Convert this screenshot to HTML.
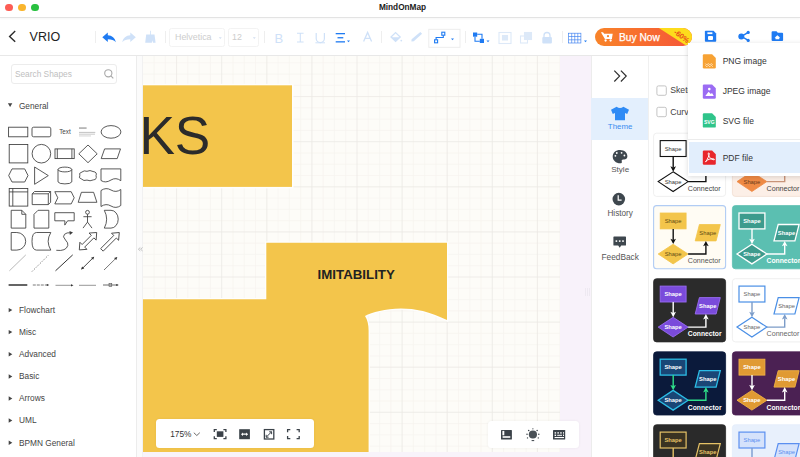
<!DOCTYPE html>
<html><head><meta charset="utf-8">
<style>
*{box-sizing:border-box;margin:0;padding:0}
html,body{width:800px;height:457px;overflow:hidden;background:#fff;font-family:"Liberation Sans",sans-serif;position:relative}
.a{position:absolute}
#titlebar{left:0;top:0;width:800px;height:18px;background:#fff;border-bottom:1px solid #e3e3e3;z-index:2;box-shadow:0 1px 2px rgba(0,0,0,.04)}
#toolbar{left:0;top:17px;width:800px;height:38.5px;background:#fff;border-bottom:1px solid #e8e8e8}
#left{left:0;top:55.5px;width:136.5px;height:402px;background:#fff;border-right:1px solid #ececec}
#strip{left:136.5px;top:55.5px;width:6.5px;height:402px;background:#fbfbfb;border-right:1px solid #f1f1f1}
#canvas{left:143px;top:55.5px;width:417.3px;height:396.5px;background:#fdfcf8;overflow:hidden}
#bstrip{left:143px;top:452px;width:417.3px;height:5px;background:#f8f3fa}
#pink{left:560.3px;top:55.5px;width:30.7px;height:402px;background:#f8f2fa}
#side{left:591px;top:55.5px;width:58px;height:402px;background:#fff;border-left:1px solid #ececec;border-right:1px solid #f0f0f0}
#theme{left:649px;top:55.5px;width:151px;height:402px;background:#fff}
#menu{left:688.4px;top:42.5px;width:120px;height:133px;background:#fff;box-shadow:0 1px 5px rgba(0,0,0,.15)}
</style></head><body>
<div id="titlebar" class="a">
<div class="a" style="left:5px;top:3.5px;width:7.8px;height:7.8px;border-radius:50%;background:#fd5d55"></div>
<div class="a" style="left:17.8px;top:3.5px;width:7.8px;height:7.8px;border-radius:50%;background:#f9b52d"></div>
<div class="a" style="left:30.9px;top:3.5px;width:7.8px;height:7.8px;border-radius:50%;background:#29c140"></div>
<div class="a" style="left:0;width:805px;top:2.8px;text-align:center;font-weight:bold;font-size:8.25px;color:#1a1a1a;line-height:10px">MindOnMap</div>
</div>
<div id="toolbar" class="a">
<svg class="a" style="left:0;top:0" width="800" height="38" viewBox="0 17 800 38">
<path d="M15.2 31 L9.6 36.4 L15.2 41.8" fill="none" stroke="#2b2b2b" stroke-width="1.4"/>
<g stroke="#eeeeee" stroke-width="1"><line x1="95.5" y1="31" x2="95.5" y2="43"/><line x1="165.5" y1="31" x2="165.5" y2="43"/><line x1="264.5" y1="31" x2="264.5" y2="43"/><line x1="381.5" y1="31" x2="381.5" y2="43"/><line x1="465.5" y1="31" x2="465.5" y2="43"/><line x1="562.5" y1="31" x2="562.5" y2="43"/></g>
<!-- undo -->
<path d="M102.3 37.3 L107.8 32.6 L107.8 35.3 C112 35.5 115 38 115.8 42.2 C114 40 111.5 39.3 107.8 39.3 L107.8 42 Z" fill="#1f7bf2"/>
<path d="M135.8 37.3 L130.3 32.6 L130.3 35.3 C126.1 35.5 123.1 38 122.3 42.2 C124.1 40 126.6 39.3 130.3 39.3 L130.3 42 Z" fill="#cfe1f8"/>
<!-- brush -->
<path d="M150 30.8 L150.8 30.8 L150.8 34.5 L154.5 34.5 L155.6 42.8 L153 42.8 L152.5 40.3 L151.8 42.8 L145.2 42.8 L146.2 34.5 L150 34.5 Z" fill="#cfe1f8"/>
<!-- font boxes -->
<rect x="169.5" y="28.5" width="55" height="18" rx="2" fill="none" stroke="#f3f3f3"/>
<rect x="228.5" y="28.5" width="30" height="18" rx="2" fill="none" stroke="#f3f3f3"/>
<path d="M218.8 37.3 L221.8 37.3 L220.3 39 Z" fill="#d3dff0"/>
<path d="M252.8 37.3 L255.8 37.3 L254.3 39 Z" fill="#d3dff0"/>
<text x="175" y="40.2" font-family="Liberation Sans" font-size="8.9" fill="#cdcdcd">Helvetica</text>
<text x="232" y="40.2" font-family="Liberation Sans" font-size="8.9" fill="#cdcdcd">12</text>
<!-- B I U -->
<text x="274.6" y="42.5" font-family="Liberation Sans" font-size="13" fill="#cfe1f8">B</text>
<path d="M297 33.3 H303.6 M300.3 33.3 L300.3 42 M297 42 H303.6" stroke="#cfe1f8" stroke-width="1.1" fill="none"/>
<path d="M316.2 33 V38.5 A4.1 4.1 0 0 0 324.4 38.5 V33" stroke="#cfe1f8" stroke-width="1.2" fill="none"/>
<line x1="315.4" y1="42.8" x2="325" y2="42.8" stroke="#cfe1f8" stroke-width="1"/>
<g fill="#1f7bf2"><rect x="335.7" y="33" width="9.3" height="1.3"/><rect x="337.5" y="37.1" width="5.8" height="1.3"/><rect x="335.7" y="41.2" width="9.3" height="1.3"/></g>
<path d="M347 40.6 L350 40.6 L348.5 42.3 Z" fill="#1f7bf2"/>
<path d="M363.6 41.6 L367.6 32.4 L371.6 41.6 M365.1 38.3 H370.1" stroke="#cfe1f8" stroke-width="1.3" fill="none"/>
<!-- fill bucket -->
<path d="M395.6 32.6 L400.2 37 L395.6 41.4 L391 37 Z" fill="none" stroke="#cfe1f8" stroke-width="1.3"/>
<path d="M391.2 37.2 H400 L395.6 41.2 Z" fill="#cfe1f8"/>
<circle cx="401.3" cy="40.6" r="0.9" fill="#cfe1f8"/>
<!-- pen -->
<path d="M420.3 32 L422.1 33.8 L413.8 41.3 L411.4 41.6 L411.6 39.2 Z" fill="#cfe1f8"/>
<!-- connector box -->
<rect x="428.8" y="29.3" width="31.2" height="18" fill="none" stroke="#ededed"/>
<g stroke="#1f7bf2" stroke-width="1.1" fill="none">
<rect x="434.6" y="39.8" width="3" height="3"/><rect x="441.8" y="32.2" width="3" height="3"/>
<path d="M436.1 39.8 V37.5 H443.3 V35.2"/></g>
<path d="M451 38.6 L454 38.6 L452.5 40.3 Z" fill="#1f7bf2"/>
<!-- position -->
<g fill="#1f7bf2"><rect x="473" y="32.5" width="4.2" height="4.2"/><rect x="479.8" y="38.8" width="4.2" height="4.2"/></g>
<path d="M477.2 34.2 H482 V38.8 M479.8 41.2 H475 V36.7" stroke="#1f7bf2" stroke-width="1.1" fill="none"/>
<path d="M486.5 40.6 L489.5 40.6 L488 42.3 Z" fill="#1f7bf2"/>
<!-- front/back/lock -->
<g fill="none" stroke="#dde9f8" stroke-width="1.1"><rect x="499" y="32.5" width="12" height="11"/><rect x="502.5" y="35.5" width="5" height="4.5" fill="#dde9f8"/>
<rect x="520.5" y="36" width="7" height="7"/><rect x="524.5" y="32.5" width="7" height="7" fill="#dde9f8"/></g>
<path d="M544 37 V35.5 A3 3 0 0 1 550 35.5 V37" stroke="#cfe1f8" stroke-width="1.3" fill="none"/>
<rect x="542.3" y="37" width="9.6" height="6.5" rx="1" fill="#cfe1f8"/>
<!-- table -->
<g stroke="#3a7ff0" stroke-width="0.65" fill="none"><rect x="568.6" y="33.2" width="12.3" height="9.8"/><line x1="568.6" y1="36.5" x2="580.9" y2="36.5"/><line x1="568.6" y1="39.8" x2="580.9" y2="39.8"/><line x1="571.7" y1="33.2" x2="571.7" y2="43"/><line x1="574.75" y1="33.2" x2="574.75" y2="43"/><line x1="577.8" y1="33.2" x2="577.8" y2="43"/></g>
<path d="M584 40.6 L587 40.6 L585.5 42.3 Z" fill="#1f7bf2"/>
</svg>
<div class="a" style="left:595px;top:10.6px;width:96.5px;height:18.4px;border-radius:9.2px;overflow:hidden;background:linear-gradient(90deg,#f8842a 0%,#f86f2e 45%,#f4553a 100%)">
<svg class="a" style="left:0;top:-0.2px" width="97" height="19" viewBox="595 27.4 97 19">
<polygon points="657.3,27.4 692,27.4 692,46 686,46" fill="#fddc1c"/>
<text transform="translate(673.2,33.6) rotate(36)" font-family="Liberation Sans" font-size="7.4" font-weight="bold" fill="#e8481c">-60%</text>
<g fill="#fff"><path d="M600.9 32.6 L603 32.6 L604.2 34.2 L612.7 34.2 L611.9 39.3 L604.9 39.3 Z"/><circle cx="605.6" cy="40.9" r="1.15"/><circle cx="610.6" cy="40.9" r="1.15"/></g>
<circle cx="608" cy="36.6" r="1.1" fill="#f8842a"/>
</svg>
<div class="a" style="left:24px;top:4.6px;font-size:10.2px;color:#fff;line-height:12px;white-space:nowrap;-webkit-text-stroke:0.25px #fff">Buy Now</div>
</div>
<svg class="a" style="left:700px;top:12px" width="90" height="32" viewBox="700 29 90 32">
<path d="M704.9 31.5 Q704.9 30.7 705.7 30.7 L713.5 30.7 L716.2 33.4 L716.2 40.9 Q716.2 41.7 715.4 41.7 L705.7 41.7 Q704.9 41.7 704.9 40.9 Z" fill="#1f7bf2"/>
<rect x="707.4" y="32.3" width="5" height="1.8" fill="#fff"/>
<rect x="708" y="36.1" width="5" height="3.8" rx="0.9" fill="#fff"/>
<g fill="#1f7bf2"><circle cx="741.3" cy="36.4" r="3"/><circle cx="748.2" cy="32.4" r="1.6"/><circle cx="748.2" cy="40.4" r="1.6"/></g>
<path d="M741.4 36.4 L748.3 32.3 M741.4 36.4 L748.3 40.3" stroke="#1f7bf2" stroke-width="1.4"/>
<path d="M771.6 32.3 Q771.6 31.3 772.6 31.3 L776.5 31.3 L777.8 32.8 L782.1 32.8 Q783.1 32.8 783.1 33.8 L783.1 40.1 Q783.1 41.1 782.1 41.1 L772.6 41.1 Q771.6 41.1 771.6 40.1 Z" fill="#1f7bf2"/>
<path d="M774.6 37.8 L777.4 35.2 L780.2 37.8 Z M775.5 37.6 H779.3 V39.3 H775.5 Z" fill="#fff"/>
</svg>
<div class="a" style="left:29.6px;top:13px;font-size:12.5px;color:#222;line-height:14px">VRIO</div>
</div>
<div id="left" class="a">
<div class="a" style="left:10.5px;top:8.3px;width:106.5px;height:20.1px;border:1px solid #ececec;border-radius:3px"></div>
<div class="a" style="left:14.9px;top:13.4px;font-size:8.34px;color:#c0c0c0;line-height:10px;white-space:nowrap">Search Shapes</div>
<svg class="a" style="left:0;top:0" width="137" height="402" viewBox="0 55.5 137 402">
<circle cx="108.3" cy="72.8" r="3.6" fill="none" stroke="#a9a9a9" stroke-width="1.1"/>
<line x1="110.9" y1="75.4" x2="113.3" y2="77.8" stroke="#a9a9a9" stroke-width="1.1"/>
<path d="M7.9 102.7 L12.3 102.7 L10.1 106.6 Z" fill="#444"/>
<g fill="#444"><path d="M8.7 307.4 L12.3 309.6 L8.7 311.8 Z"/><path d="M8.7 329.4 L12.3 331.6 L8.7 333.8 Z"/><path d="M8.7 351.6 L12.3 353.8 L8.7 356.0 Z"/><path d="M8.7 373.8 L12.3 376.0 L8.7 378.2 Z"/><path d="M8.7 395.8 L12.3 398.0 L8.7 400.2 Z"/><path d="M8.7 417.8 L12.3 420.0 L8.7 422.2 Z"/><path d="M8.7 440.0 L12.3 442.2 L8.7 444.4 Z"/></g>
<g fill="none" stroke="#3c3c3c" stroke-width="0.85">
<!-- row1 -->
<rect x="8.6" y="126.7" width="19.2" height="9.6"/>
<rect x="32" y="126.7" width="18.8" height="9.6" rx="1.6"/>
<ellipse cx="111" cy="131.4" rx="9.9" ry="6.3"/>
<!-- row2 -->
<rect x="9.2" y="144" width="18.6" height="18.4"/>
<circle cx="41.4" cy="153.2" r="9.3"/>
<rect x="55" y="148.4" width="19.2" height="9.7"/><line x1="57.3" y1="148.4" x2="57.3" y2="158.1"/><line x1="71.9" y1="148.4" x2="71.9" y2="158.1"/>
<path d="M88 144.5 L97.2 153.3 L88 162.2 L78.8 153.3 Z"/>
<path d="M104.6 148.4 L120.5 148.4 L117.2 158.1 L101.2 158.1 Z"/>
<!-- row3 -->
<path d="M12 168.4 L24.7 168.4 L28 175 L24.7 181.5 L12 181.5 L8.7 175 Z"/>
<path d="M34.6 166.5 L48.3 175.1 L34.6 183.8 Z"/>
<path d="M58 169 L58 181.4 A7 2.4 0 0 0 71.8 181.4 L71.8 169"/><ellipse cx="64.9" cy="169" rx="6.9" ry="2.4"/>
<path d="M82 171.5 Q84 169.6 87 170.8 Q90 169.2 93 171 Q97.5 171.6 96 175.2 Q97.3 179 93.3 179.4 Q90 181 87 179.6 Q83.5 180.8 81.8 178.7 Q78 177.5 79.8 175 Q78.5 172.4 82 171.5 Z"/>
<path d="M101 168.4 L120.8 168.4 L120.8 180.2 Q116 176.5 111 179.5 Q105.5 183 101 180 Z"/>
<!-- row4 -->
<rect x="9.2" y="188" width="18.6" height="17.6"/><line x1="12.8" y1="188" x2="12.8" y2="205.6"/><line x1="9.2" y1="191.4" x2="27.8" y2="191.4"/>
<path d="M32.2 193.3 L34.5 191 L50.6 191 L50.6 201.8 L48.3 204.1 L32.2 204.1 Z M32.2 193.3 L48.3 193.3 L50.6 191 M48.3 193.3 L48.3 204.1"/>
<path d="M54.8 191.2 L71.2 191.2 L74.2 197.3 L71.2 203.4 L54.8 203.4 L57.8 197.3 Z"/>
<path d="M81.4 191.8 L93.6 191.8 L96.9 201.8 L78.2 201.8 Z"/>
<path d="M101 190 Q106 186.5 111 189.5 Q116 192.5 120.8 189 L120.8 205 Q116 208.5 111 205.5 Q106 202.5 101 206 Z"/>
<!-- row5 -->
<path d="M11.2 209.8 L21.8 209.8 L25.8 213.8 L25.8 227.6 L11.2 227.6 Z M21.8 209.8 L21.8 213.8 L25.8 213.8"/>
<path d="M38 209.8 L48.8 209.8 L48.8 227.6 L34 227.6 L34 213.8 Z"/>
<path d="M54.8 212.2 L74.2 212.2 L74.2 220.3 L67.6 220.3 L64.8 224.6 L64.9 220.3 L54.8 220.3 Z"/>
<circle cx="87.5" cy="211.8" r="1.9"/><path d="M87.5 213.7 L87.5 221.6 M83.4 216.2 L91.6 216.2 M87.5 221.6 L83 227.6 M87.5 221.6 L92 227.6"/>
<path d="M104.3 209.8 L111 209.8 A7.2 8.9 0 0 1 111 227.6 L104.3 227.6 Q109 218.7 104.3 209.8 Z"/>
<!-- row6 -->
<path d="M11.2 232 L16.8 232 A8.9 8.8 0 0 1 16.8 249.6 L11.2 249.6 Z"/>
<path d="M36.5 232 L50.8 232 Q45.5 240.8 50.8 249.6 L36.5 249.6 Q32 249.6 32 240.8 Q32 232 36.5 232 Z"/>
<path d="M56.3 249.8 Q66 251 67.8 245 Q68.5 242.4 65.5 239.5 Q62 236 64.5 233.8 Q67 231.8 70 232.3"/>
<polygon transform="translate(88,240.7) rotate(-45)" points="-12.3,0 -6.5,-5 -6.5,-1.8 6.5,-1.8 6.5,-5 12.3,0 6.5,5 6.5,1.8 -6.5,1.8 -6.5,5"/>
<polygon transform="translate(110.6,240.7) rotate(-45)" points="-12.3,-1.8 6.3,-1.8 6.3,-5 12.3,0 6.3,5 6.3,1.8 -12.3,1.8"/>
</g>
<path d="M69.5 230.6 L73 232.1 L69.8 234.4 Z" fill="#3c3c3c"/>
<!-- row7 lines -->
<line x1="9.4" y1="270.3" x2="25.8" y2="254.4" stroke="#8a8a8a" stroke-width="0.6"/>
<line x1="32" y1="271" x2="48.4" y2="254.7" stroke="#555" stroke-width="0.8" stroke-dasharray="1.3 1.5"/>
<line x1="55.5" y1="270.3" x2="72.7" y2="254.4" stroke="#333" stroke-width="1"/>
<line x1="81.8" y1="268.5" x2="93.5" y2="256.9" stroke="#333" stroke-width="0.9"/>
<path d="M94.2 256.3 L91 257.2 L93.2 259.3 Z M81 269 L84.3 268.1 L82.1 266 Z" fill="#333"/>
<line x1="104" y1="269.5" x2="116.5" y2="257.2" stroke="#555" stroke-width="0.8"/>
<path d="M117.3 256.4 L114 257.4 L116.3 259.6 Z" fill="#333"/>
<!-- row8 -->
<line x1="8.6" y1="284.5" x2="27.3" y2="284.5" stroke="#111" stroke-width="1.3"/>
<line x1="32.8" y1="284.5" x2="47.5" y2="284.5" stroke="#555" stroke-width="0.8" stroke-dasharray="3 1"/><path d="M49.3 284.5 L46.8 283.4 L46.8 285.6 Z" fill="#222"/>
<line x1="55.5" y1="284.8" x2="72" y2="284.8" stroke="#8c8c8c" stroke-width="0.9"/><path d="M73.5 284.8 L71 283.7 L71 285.9 Z" fill="#333"/>
<line x1="79" y1="284.8" x2="96" y2="284.8" stroke="#8c8c8c" stroke-width="0.9"/>
<line x1="103" y1="284.5" x2="117.5" y2="284.5" stroke="#444" stroke-width="0.8"/><rect x="109" y="283.2" width="2.8" height="2.6" fill="#aaa" stroke="#444" stroke-width="0.5"/><path d="M118.8 284.5 L116.3 283.4 L116.3 285.6 Z" fill="#222"/>
<!-- heading -->
<rect x="79" y="127" width="7.6" height="1.1" fill="#888"/>
<rect x="79" y="131.4" width="16.3" height="0.9" fill="#bbb"/><rect x="79" y="133.2" width="16" height="0.9" fill="#c4c4c4"/><rect x="79" y="135" width="12" height="0.9" fill="#cfcfcf"/>
</svg>
<div class="a" style="left:59.2px;top:72px;font-size:6.3px;color:#444;line-height:7px">Text</div>
<div class="a" style="left:18.9px;top:45.2px;font-size:8.3px;color:#444;line-height:10px">General</div>
<div class="a" style="left:19px;top:249.5px;font-size:8.3px;color:#444;line-height:10px">Flowchart</div>
<div class="a" style="left:19px;top:271.5px;font-size:8.3px;color:#444;line-height:10px">Misc</div>
<div class="a" style="left:19px;top:293.7px;font-size:8.3px;color:#444;line-height:10px">Advanced</div>
<div class="a" style="left:19px;top:315.9px;font-size:8.3px;color:#444;line-height:10px">Basic</div>
<div class="a" style="left:19px;top:337.9px;font-size:8.3px;color:#444;line-height:10px">Arrows</div>
<div class="a" style="left:19px;top:359.9px;font-size:8.3px;color:#444;line-height:10px">UML</div>
<div class="a" style="left:19px;top:382.1px;font-size:8.3px;color:#444;line-height:10px">BPMN General</div>
</div>
<div id="strip" class="a"><svg class="a" style="left:0;top:0" width="7" height="402" viewBox="136.5 55.5 7 402"><path d="M139.8 247 L137.9 248.7 L139.8 250.4 M142 247 L140.1 248.7 L142 250.4" stroke="#999" stroke-width="0.6" fill="none"/></svg></div>
<div id="canvas" class="a"><svg class="a" style="left:0;top:0" width="417.3" height="396.5"><g stroke="#f6f4ef" stroke-width="0.7"><line x1="11.05" y1="0" x2="11.05" y2="396.5"/><line x1="22.32" y1="0" x2="22.32" y2="396.5"/><line x1="44.87" y1="0" x2="44.87" y2="396.5"/><line x1="56.15" y1="0" x2="56.15" y2="396.5"/><line x1="67.42" y1="0" x2="67.42" y2="396.5"/><line x1="89.97" y1="0" x2="89.97" y2="396.5"/><line x1="101.25" y1="0" x2="101.25" y2="396.5"/><line x1="112.52" y1="0" x2="112.52" y2="396.5"/><line x1="135.07" y1="0" x2="135.07" y2="396.5"/><line x1="146.35" y1="0" x2="146.35" y2="396.5"/><line x1="157.62" y1="0" x2="157.62" y2="396.5"/><line x1="180.18" y1="0" x2="180.18" y2="396.5"/><line x1="191.45" y1="0" x2="191.45" y2="396.5"/><line x1="202.72" y1="0" x2="202.72" y2="396.5"/><line x1="225.28" y1="0" x2="225.28" y2="396.5"/><line x1="236.55" y1="0" x2="236.55" y2="396.5"/><line x1="247.82" y1="0" x2="247.82" y2="396.5"/><line x1="270.38" y1="0" x2="270.38" y2="396.5"/><line x1="281.65" y1="0" x2="281.65" y2="396.5"/><line x1="292.92" y1="0" x2="292.92" y2="396.5"/><line x1="315.48" y1="0" x2="315.48" y2="396.5"/><line x1="326.75" y1="0" x2="326.75" y2="396.5"/><line x1="338.02" y1="0" x2="338.02" y2="396.5"/><line x1="360.58" y1="0" x2="360.58" y2="396.5"/><line x1="371.85" y1="0" x2="371.85" y2="396.5"/><line x1="383.12" y1="0" x2="383.12" y2="396.5"/><line x1="405.67" y1="0" x2="405.67" y2="396.5"/><line x1="416.95" y1="0" x2="416.95" y2="396.5"/><line x1="0" y1="6.77" x2="417.3" y2="6.77"/><line x1="0" y1="18.05" x2="417.3" y2="18.05"/><line x1="0" y1="29.32" x2="417.3" y2="29.32"/><line x1="0" y1="51.87" x2="417.3" y2="51.87"/><line x1="0" y1="63.15" x2="417.3" y2="63.15"/><line x1="0" y1="74.42" x2="417.3" y2="74.42"/><line x1="0" y1="96.97" x2="417.3" y2="96.97"/><line x1="0" y1="108.25" x2="417.3" y2="108.25"/><line x1="0" y1="119.52" x2="417.3" y2="119.52"/><line x1="0" y1="142.07" x2="417.3" y2="142.07"/><line x1="0" y1="153.35" x2="417.3" y2="153.35"/><line x1="0" y1="164.62" x2="417.3" y2="164.62"/><line x1="0" y1="187.18" x2="417.3" y2="187.18"/><line x1="0" y1="198.45" x2="417.3" y2="198.45"/><line x1="0" y1="209.72" x2="417.3" y2="209.72"/><line x1="0" y1="232.28" x2="417.3" y2="232.28"/><line x1="0" y1="243.55" x2="417.3" y2="243.55"/><line x1="0" y1="254.82" x2="417.3" y2="254.82"/><line x1="0" y1="277.38" x2="417.3" y2="277.38"/><line x1="0" y1="288.65" x2="417.3" y2="288.65"/><line x1="0" y1="299.92" x2="417.3" y2="299.92"/><line x1="0" y1="322.48" x2="417.3" y2="322.48"/><line x1="0" y1="333.75" x2="417.3" y2="333.75"/><line x1="0" y1="345.02" x2="417.3" y2="345.02"/><line x1="0" y1="367.58" x2="417.3" y2="367.58"/><line x1="0" y1="378.85" x2="417.3" y2="378.85"/><line x1="0" y1="390.12" x2="417.3" y2="390.12"/></g><g stroke="#ebe9e4" stroke-width="0.8"><line x1="33.60" y1="0" x2="33.60" y2="396.5"/><line x1="78.70" y1="0" x2="78.70" y2="396.5"/><line x1="123.80" y1="0" x2="123.80" y2="396.5"/><line x1="168.90" y1="0" x2="168.90" y2="396.5"/><line x1="214.00" y1="0" x2="214.00" y2="396.5"/><line x1="259.10" y1="0" x2="259.10" y2="396.5"/><line x1="304.20" y1="0" x2="304.20" y2="396.5"/><line x1="349.30" y1="0" x2="349.30" y2="396.5"/><line x1="394.40" y1="0" x2="394.40" y2="396.5"/><line x1="0" y1="40.60" x2="417.3" y2="40.60"/><line x1="0" y1="85.70" x2="417.3" y2="85.70"/><line x1="0" y1="130.80" x2="417.3" y2="130.80"/><line x1="0" y1="175.90" x2="417.3" y2="175.90"/><line x1="0" y1="221.00" x2="417.3" y2="221.00"/><line x1="0" y1="266.10" x2="417.3" y2="266.10"/><line x1="0" y1="311.20" x2="417.3" y2="311.20"/><line x1="0" y1="356.30" x2="417.3" y2="356.30"/></g></svg><svg class="a" style="left:0;top:0" width="417.3" height="396.5" viewBox="143 55.5 417.3 396.5">
<rect x="140" y="84.8" width="152" height="101.6" fill="#fff" stroke="#fefefd" stroke-width="3"/><rect x="140" y="84.8" width="152" height="101.6" fill="#f3c54b"/>
<path d="M266.3 242.3 L447 242.3 L447 319.6 C430 311 415 308 401 308 C385 308 372 312 365 315.4 C367.5 319 368.6 324 368.6 330 L368.6 452 L140 452 L140 298.8 L266.3 298.8 Z" fill="#fff" stroke="#fefefd" stroke-width="2.6"/><path d="M266.3 242.3 L447 242.3 L447 319.6 C430 311 415 308 401 308 C385 308 372 312 365 315.4 C367.5 319 368.6 324 368.6 330 L368.6 452 L140 452 L140 298.8 L266.3 298.8 Z" fill="#f3c54b"/>
<text x="139.4" y="154" font-family="Liberation Sans" font-size="53.2" fill="#2b2b2b">KS</text>
<text x="317.6" y="278.8" font-family="Liberation Sans" font-weight="bold" font-size="13.3" fill="#222">IMITABILITY</text>
</svg></div>
<div id="bstrip" class="a"></div>
<div id="pink" class="a"><div class="a" style="left:24.3px;top:232.5px;width:0.8px;height:8px;background:#eee9f1"></div><div class="a" style="left:26.6px;top:232.5px;width:0.8px;height:8px;background:#eee9f1"></div><div class="a" style="left:28.9px;top:232.5px;width:0.8px;height:8px;background:#eee9f1"></div></div>
<div id="side" class="a">
<div class="a" style="left:-1px;top:42.5px;width:56.5px;height:41.8px;background:#e3effd"></div>
<svg class="a" style="left:-1px;top:0" width="57" height="402" viewBox="591 55.5 57 402">
<path d="M614.3 70.2 L619.6 75.6 L614.3 81 M620.9 70.2 L626.2 75.6 L620.9 81" fill="none" stroke="#2e2e2e" stroke-width="1.2"/>
<path d="M616.6 106.2 Q620 108.6 623.4 106.2 L629 109.2 L627.2 113.4 L625 112.6 L625 119.8 L615 119.8 L615 112.6 L612.8 113.4 L611 109.2 Z" fill="#2f8bf5"/>
<path d="M620 149.6 C624.5 149.6 627.4 152.4 627.4 155.8 C627.4 158.8 625.2 159.2 623.4 159 C621.8 158.9 621.4 160 621.8 161 C622.2 162 621.6 162.8 620.3 162.8 C615.8 162.8 612.7 159.6 612.7 156.2 C612.7 152.3 615.8 149.6 620 149.6 Z" fill="#3e474e"/>
<g fill="#fff"><circle cx="616.8" cy="152.5" r="0.9"/><circle cx="621.6" cy="152.3" r="0.9"/><circle cx="624.4" cy="155" r="0.9"/><circle cx="615.4" cy="155.3" r="0.9"/></g>
<circle cx="618.8" cy="198.6" r="6.3" fill="#3e474e"/>
<path d="M618.2 194.8 L618.2 199.6 L621.6 199.6" stroke="#fff" stroke-width="1.2" fill="none"/>
<path d="M613.4 236.6 Q613.4 235.9 614.1 235.9 L625.3 235.9 Q626 235.9 626 236.6 L626 244.4 Q626 245.1 625.3 245.1 L621.2 245.1 L619.7 247.3 L618.2 245.1 L614.1 245.1 Q613.4 245.1 613.4 244.4 Z" fill="#3e474e"/>
<g fill="#fff"><rect x="615.6" y="239.8" width="1.6" height="1.6"/><rect x="618.9" y="239.8" width="1.6" height="1.6"/><rect x="622.2" y="239.8" width="1.6" height="1.6"/></g>
</svg>
<div class="a" style="left:0;width:56.3px;top:66.6px;text-align:center;font-size:7.9px;color:#3a8cf0;line-height:10px">Theme</div>
<div class="a" style="left:0;width:56.3px;top:109.3px;text-align:center;font-size:8.1px;color:#555;line-height:10px">Style</div>
<div class="a" style="left:0;width:56.3px;top:153.3px;text-align:center;font-size:8.2px;color:#555;line-height:10px">History</div>
<div class="a" style="left:0;width:56.3px;top:196.6px;text-align:center;font-size:8.3px;color:#555;line-height:10px">FeedBack</div>
</div>
<div id="theme" class="a"><svg class="a" style="left:0;top:0" width="151" height="402" viewBox="649 55.5 151 402"><rect x="653.6" y="132.7" width="72" height="63.2" rx="3" fill="#ffffff" stroke="#ebebeb" stroke-width="0.8"/><g transform="translate(653.6,132.2)"><rect x="6.6" y="7.9" width="25.9" height="15.9" fill="#ffffff" stroke="#111" stroke-width="1.1"/><line x1="19.6" y1="23.8" x2="19.6" y2="35" stroke="#111" stroke-width="1.4"/><path d="M16.8 33.6 L19.6 39 L22.4 33.6 L19.6 34.8 Z" fill="#111"/><path d="M19.5 39.1 L34.5 48.9 L19.5 58.8 L4.6 48.9 Z" fill="#ffffff" stroke="#111" stroke-width="1.1" stroke-linejoin="miter"/><path d="M45.8 19.4 L66.7 19.4 L62.5 35.8 L41.6 35.8 Z" fill="#ffffff" stroke="#111" stroke-width="1.1"/><path d="M34.5 48.9 L52.3 48.9 L52.3 40" fill="none" stroke="#111" stroke-width="1.4"/><path d="M49.5 41.2 L52.3 35.8 L55.1 41.2 L52.3 40 Z" fill="#111"/><text x="34.2" y="58.3" font-family="Liberation Sans" font-size="7.1" fill="#444">Connector</text><text x="19.55" y="17.9" text-anchor="middle" font-family="Liberation Sans" font-size="5.8" fill="#333">Shape</text><text x="19.5" y="50.9" text-anchor="middle" font-family="Liberation Sans" font-size="5.8" fill="#333">Shape</text><text x="54.15" y="29.6" text-anchor="middle" font-family="Liberation Sans" font-size="5.8" fill="#333">Shape</text></g><rect x="732.4" y="132.7" width="72" height="63.2" rx="3" fill="#fcefe7" stroke="#f1ded2" stroke-width="0.8"/><g transform="translate(732.4,132.2)"><rect x="6.6" y="7.9" width="25.9" height="15.9" fill="#ef8a45" stroke="#ef8a45" stroke-width="0.8"/><line x1="19.6" y1="23.8" x2="19.6" y2="35" stroke="#c9957a" stroke-width="1.4"/><path d="M16.8 33.6 L19.6 39 L22.4 33.6 L19.6 34.8 Z" fill="#c9957a"/><path d="M19.5 39.1 L34.5 48.9 L19.5 58.8 L4.6 48.9 Z" fill="#ef8a45" stroke="#ef8a45" stroke-width="0.8" stroke-linejoin="miter"/><path d="M45.8 19.4 L66.7 19.4 L62.5 35.8 L41.6 35.8 Z" fill="#ef8a45" stroke="#ef8a45" stroke-width="0.8"/><path d="M34.5 48.9 L52.3 48.9 L52.3 40" fill="none" stroke="#c9957a" stroke-width="1.4"/><path d="M49.5 41.2 L52.3 35.8 L55.1 41.2 L52.3 40 Z" fill="#c9957a"/><text x="34.2" y="58.3" font-family="Liberation Sans" font-size="7.1" fill="#444">Connector</text><text x="19.55" y="17.9" text-anchor="middle" font-family="Liberation Sans" font-size="5.8" fill="#6b3b1a">Shape</text><text x="19.5" y="50.9" text-anchor="middle" font-family="Liberation Sans" font-size="5.8" fill="#6b3b1a">Shape</text><text x="54.15" y="29.6" text-anchor="middle" font-family="Liberation Sans" font-size="5.8" fill="#6b3b1a">Shape</text></g><rect x="653.6" y="205.1" width="72" height="63.2" rx="3" fill="#fffcf4" stroke="#b1ccf4" stroke-width="1.1"/><g transform="translate(653.6,204.6)"><rect x="6.6" y="7.9" width="25.9" height="15.9" fill="#f3c54b" stroke="#f3c54b" stroke-width="0.8"/><line x1="19.6" y1="23.8" x2="19.6" y2="35" stroke="#111" stroke-width="1.4"/><path d="M16.8 33.6 L19.6 39 L22.4 33.6 L19.6 34.8 Z" fill="#111"/><path d="M19.5 39.1 L34.5 48.9 L19.5 58.8 L4.6 48.9 Z" fill="#f3c54b" stroke="#f3c54b" stroke-width="0.8" stroke-linejoin="miter"/><path d="M45.8 19.4 L66.7 19.4 L62.5 35.8 L41.6 35.8 Z" fill="#f3c54b" stroke="#f3c54b" stroke-width="0.8"/><path d="M34.5 48.9 L52.3 48.9 L52.3 40" fill="none" stroke="#111" stroke-width="1.4"/><path d="M49.5 41.2 L52.3 35.8 L55.1 41.2 L52.3 40 Z" fill="#111"/><text x="34.2" y="58.3" font-family="Liberation Sans" font-size="7.1" fill="#555">Connector</text><text x="19.55" y="17.9" text-anchor="middle" font-family="Liberation Sans" font-size="5.8" fill="#5e4b14">Shape</text><text x="19.5" y="50.9" text-anchor="middle" font-family="Liberation Sans" font-size="5.8" fill="#5e4b14">Shape</text><text x="54.15" y="29.6" text-anchor="middle" font-family="Liberation Sans" font-size="5.8" fill="#5e4b14">Shape</text></g><rect x="732.4" y="205.1" width="72" height="63.2" rx="3" fill="#5bbfb1" stroke="#5bbfb1" stroke-width="0.8"/><g transform="translate(732.4,204.6)"><rect x="6.6" y="7.9" width="25.9" height="15.9" fill="#3d9b8d" stroke="#ffffff" stroke-width="1.3"/><line x1="19.6" y1="23.8" x2="19.6" y2="35" stroke="#ffffff" stroke-width="1.4"/><path d="M16.8 33.6 L19.6 39 L22.4 33.6 L19.6 34.8 Z" fill="#ffffff"/><path d="M19.5 39.1 L34.5 48.9 L19.5 58.8 L4.6 48.9 Z" fill="#3d9b8d" stroke="#ffffff" stroke-width="1.3" stroke-linejoin="miter"/><path d="M45.8 19.4 L66.7 19.4 L62.5 35.8 L41.6 35.8 Z" fill="#3d9b8d" stroke="#ffffff" stroke-width="1.3"/><path d="M34.5 48.9 L52.3 48.9 L52.3 40" fill="none" stroke="#ffffff" stroke-width="1.4"/><path d="M49.5 41.2 L52.3 35.8 L55.1 41.2 L52.3 40 Z" fill="#ffffff"/><text x="34.2" y="58.3" font-family="Liberation Sans" font-size="6.75" font-weight="bold" fill="#ffffff">Connector</text><text x="19.55" y="17.9" text-anchor="middle" font-family="Liberation Sans" font-size="5.8" font-weight="bold" fill="#ffffff">Shape</text><text x="19.5" y="50.9" text-anchor="middle" font-family="Liberation Sans" font-size="5.8" font-weight="bold" fill="#ffffff">Shape</text><text x="54.15" y="29.6" text-anchor="middle" font-family="Liberation Sans" font-size="5.8" font-weight="bold" fill="#ffffff">Shape</text></g><rect x="653.6" y="278.2" width="72" height="63.2" rx="3" fill="#2b2b2b" stroke="#2b2b2b" stroke-width="0.8"/><g transform="translate(653.6,277.7)"><rect x="6.6" y="7.9" width="25.9" height="15.9" fill="#7a4bdb" stroke="#986cf2" stroke-width="0.9"/><line x1="19.6" y1="23.8" x2="19.6" y2="35" stroke="#ffffff" stroke-width="1.4"/><path d="M16.8 33.6 L19.6 39 L22.4 33.6 L19.6 34.8 Z" fill="#ffffff"/><path d="M19.5 39.1 L34.5 48.9 L19.5 58.8 L4.6 48.9 Z" fill="#7a4bdb" stroke="#986cf2" stroke-width="0.9" stroke-linejoin="miter"/><path d="M45.8 19.4 L66.7 19.4 L62.5 35.8 L41.6 35.8 Z" fill="#7a4bdb" stroke="#986cf2" stroke-width="0.9"/><path d="M34.5 48.9 L52.3 48.9 L52.3 40" fill="none" stroke="#ffffff" stroke-width="1.4"/><path d="M49.5 41.2 L52.3 35.8 L55.1 41.2 L52.3 40 Z" fill="#ffffff"/><text x="34.2" y="58.3" font-family="Liberation Sans" font-size="6.75" font-weight="bold" fill="#ffffff">Connector</text><text x="19.55" y="17.9" text-anchor="middle" font-family="Liberation Sans" font-size="5.8" font-weight="bold" fill="#ffffff">Shape</text><text x="19.5" y="50.9" text-anchor="middle" font-family="Liberation Sans" font-size="5.8" font-weight="bold" fill="#ffffff">Shape</text><text x="54.15" y="29.6" text-anchor="middle" font-family="Liberation Sans" font-size="5.8" font-weight="bold" fill="#ffffff">Shape</text></g><rect x="732.4" y="278.2" width="72" height="63.2" rx="3" fill="#ffffff" stroke="#ebebeb" stroke-width="0.8"/><g transform="translate(732.4,277.7)"><rect x="6.6" y="7.9" width="25.9" height="15.9" fill="#ffffff" stroke="#4a8fe6" stroke-width="1.2"/><line x1="19.6" y1="23.8" x2="19.6" y2="35" stroke="#7c9cc8" stroke-width="1.4"/><path d="M16.8 33.6 L19.6 39 L22.4 33.6 L19.6 34.8 Z" fill="#7c9cc8"/><path d="M19.5 39.1 L34.5 48.9 L19.5 58.8 L4.6 48.9 Z" fill="#ffffff" stroke="#4a8fe6" stroke-width="1.2" stroke-linejoin="miter"/><path d="M45.8 19.4 L66.7 19.4 L62.5 35.8 L41.6 35.8 Z" fill="#ffffff" stroke="#4a8fe6" stroke-width="1.2"/><path d="M34.5 48.9 L52.3 48.9 L52.3 40" fill="none" stroke="#7c9cc8" stroke-width="1.4"/><path d="M49.5 41.2 L52.3 35.8 L55.1 41.2 L52.3 40 Z" fill="#7c9cc8"/><text x="34.2" y="58.3" font-family="Liberation Sans" font-size="7.1" fill="#666">Connector</text><text x="19.55" y="17.9" text-anchor="middle" font-family="Liberation Sans" font-size="5.8" fill="#666">Shape</text><text x="19.5" y="50.9" text-anchor="middle" font-family="Liberation Sans" font-size="5.8" fill="#666">Shape</text><text x="54.15" y="29.6" text-anchor="middle" font-family="Liberation Sans" font-size="5.8" fill="#666">Shape</text></g><rect x="653.6" y="351.3" width="72" height="63.2" rx="3" fill="#0b1a3b" stroke="#0b1a3b" stroke-width="0.8"/><g transform="translate(653.6,350.8)"><rect x="6.6" y="7.9" width="25.9" height="15.9" fill="#1a4676" stroke="#2cbde6" stroke-width="1.3"/><line x1="19.6" y1="23.8" x2="19.6" y2="35" stroke="#2fe08a" stroke-width="1.4"/><path d="M16.8 33.6 L19.6 39 L22.4 33.6 L19.6 34.8 Z" fill="#2fe08a"/><path d="M19.5 39.1 L34.5 48.9 L19.5 58.8 L4.6 48.9 Z" fill="#1a4676" stroke="#2cbde6" stroke-width="1.3" stroke-linejoin="miter"/><path d="M45.8 19.4 L66.7 19.4 L62.5 35.8 L41.6 35.8 Z" fill="#1a4676" stroke="#2cbde6" stroke-width="1.3"/><path d="M34.5 48.9 L52.3 48.9 L52.3 40" fill="none" stroke="#2fe08a" stroke-width="1.4"/><path d="M49.5 41.2 L52.3 35.8 L55.1 41.2 L52.3 40 Z" fill="#2fe08a"/><text x="34.2" y="58.3" font-family="Liberation Sans" font-size="6.75" font-weight="bold" fill="#ffffff">Connector</text><text x="19.55" y="17.9" text-anchor="middle" font-family="Liberation Sans" font-size="5.8" font-weight="bold" fill="#ffffff">Shape</text><text x="19.5" y="50.9" text-anchor="middle" font-family="Liberation Sans" font-size="5.8" font-weight="bold" fill="#ffffff">Shape</text><text x="54.15" y="29.6" text-anchor="middle" font-family="Liberation Sans" font-size="5.8" font-weight="bold" fill="#ffffff">Shape</text></g><rect x="732.4" y="351.3" width="72" height="63.2" rx="3" fill="#4b2153" stroke="#4b2153" stroke-width="0.8"/><g transform="translate(732.4,350.8)"><rect x="6.6" y="7.9" width="25.9" height="15.9" fill="#e09a33" stroke="#f1b244" stroke-width="0.9"/><line x1="19.6" y1="23.8" x2="19.6" y2="35" stroke="#ffffff" stroke-width="1.4"/><path d="M16.8 33.6 L19.6 39 L22.4 33.6 L19.6 34.8 Z" fill="#ffffff"/><path d="M19.5 39.1 L34.5 48.9 L19.5 58.8 L4.6 48.9 Z" fill="#e09a33" stroke="#f1b244" stroke-width="0.9" stroke-linejoin="miter"/><path d="M45.8 19.4 L66.7 19.4 L62.5 35.8 L41.6 35.8 Z" fill="#e09a33" stroke="#f1b244" stroke-width="0.9"/><path d="M34.5 48.9 L52.3 48.9 L52.3 40" fill="none" stroke="#ffffff" stroke-width="1.4"/><path d="M49.5 41.2 L52.3 35.8 L55.1 41.2 L52.3 40 Z" fill="#ffffff"/><text x="34.2" y="58.3" font-family="Liberation Sans" font-size="6.75" font-weight="bold" fill="#ffffff">Connector</text><text x="19.55" y="17.9" text-anchor="middle" font-family="Liberation Sans" font-size="5.8" font-weight="bold" fill="#ffffff">Shape</text><text x="19.5" y="50.9" text-anchor="middle" font-family="Liberation Sans" font-size="5.8" font-weight="bold" fill="#ffffff">Shape</text><text x="54.15" y="29.6" text-anchor="middle" font-family="Liberation Sans" font-size="5.8" font-weight="bold" fill="#ffffff">Shape</text></g><rect x="653.6" y="424.2" width="72" height="63.2" rx="3" fill="#2a2a2a" stroke="#2a2a2a" stroke-width="0.8"/><g transform="translate(653.6,423.7)"><rect x="6.6" y="7.9" width="25.9" height="15.9" fill="#3a3322" stroke="#e6c266" stroke-width="1.2"/><line x1="19.6" y1="23.8" x2="19.6" y2="35" stroke="#e6c266" stroke-width="1.4"/><path d="M16.8 33.6 L19.6 39 L22.4 33.6 L19.6 34.8 Z" fill="#e6c266"/><path d="M19.5 39.1 L34.5 48.9 L19.5 58.8 L4.6 48.9 Z" fill="#3a3322" stroke="#e6c266" stroke-width="1.2" stroke-linejoin="miter"/><path d="M45.8 19.4 L66.7 19.4 L62.5 35.8 L41.6 35.8 Z" fill="#3a3322" stroke="#e6c266" stroke-width="1.2"/><path d="M34.5 48.9 L52.3 48.9 L52.3 40" fill="none" stroke="#e6c266" stroke-width="1.4"/><path d="M49.5 41.2 L52.3 35.8 L55.1 41.2 L52.3 40 Z" fill="#e6c266"/><text x="34.2" y="58.3" font-family="Liberation Sans" font-size="6.75" font-weight="bold" fill="#e6c266">Connector</text><text x="19.55" y="17.9" text-anchor="middle" font-family="Liberation Sans" font-size="5.8" font-weight="bold" fill="#e6c266">Shape</text><text x="19.5" y="50.9" text-anchor="middle" font-family="Liberation Sans" font-size="5.8" font-weight="bold" fill="#e6c266">Shape</text><text x="54.15" y="29.6" text-anchor="middle" font-family="Liberation Sans" font-size="5.8" font-weight="bold" fill="#e6c266">Shape</text></g><rect x="732.4" y="424.2" width="72" height="63.2" rx="3" fill="#e8f0fc" stroke="#e3ecfa" stroke-width="0.8"/><g transform="translate(732.4,423.7)"><rect x="6.6" y="7.9" width="25.9" height="15.9" fill="#d5e2fb" stroke="#5b8ff0" stroke-width="1.2"/><line x1="19.6" y1="23.8" x2="19.6" y2="35" stroke="#7a9ad0" stroke-width="1.4"/><path d="M16.8 33.6 L19.6 39 L22.4 33.6 L19.6 34.8 Z" fill="#7a9ad0"/><path d="M19.5 39.1 L34.5 48.9 L19.5 58.8 L4.6 48.9 Z" fill="#d5e2fb" stroke="#5b8ff0" stroke-width="1.2" stroke-linejoin="miter"/><path d="M45.8 19.4 L66.7 19.4 L62.5 35.8 L41.6 35.8 Z" fill="#d5e2fb" stroke="#5b8ff0" stroke-width="1.2"/><path d="M34.5 48.9 L52.3 48.9 L52.3 40" fill="none" stroke="#7a9ad0" stroke-width="1.4"/><path d="M49.5 41.2 L52.3 35.8 L55.1 41.2 L52.3 40 Z" fill="#7a9ad0"/><text x="34.2" y="58.3" font-family="Liberation Sans" font-size="7.1" fill="#5b8ff0">Connector</text><text x="19.55" y="17.9" text-anchor="middle" font-family="Liberation Sans" font-size="5.8" fill="#5b8ff0">Shape</text><text x="19.5" y="50.9" text-anchor="middle" font-family="Liberation Sans" font-size="5.8" fill="#5b8ff0">Shape</text><text x="54.15" y="29.6" text-anchor="middle" font-family="Liberation Sans" font-size="5.8" fill="#5b8ff0">Shape</text></g>
<rect x="656.9" y="85.4" width="9.4" height="9.4" rx="1.5" fill="#fff" stroke="#bdbdbd" stroke-width="0.9"/>
<rect x="656.9" y="106.8" width="9.4" height="9.4" rx="1.5" fill="#fff" stroke="#bdbdbd" stroke-width="0.9"/>
<text x="670.2" y="92.6" font-family="Liberation Sans" font-size="8.7" fill="#444">Sketch</text>
<text x="670.2" y="114" font-family="Liberation Sans" font-size="8.7" fill="#444">Curve</text>
</svg></div>
<div id="menu" class="a">
<div class="a" style="left:0.8px;top:99.5px;width:120px;height:30.6px;background:#e2eefc"></div>
<div class="a" style="left:0;top:96px;width:120px;height:1px;background:#ececec"></div>
<svg class="a" style="left:0;top:0" width="112" height="131" viewBox="688.4 42.5 111.6 131">
<path d="M703 54.9 Q703 53.7 704.2 53.7 L712.3 53.7 L716 57.4 L716 66.8 Q716 68.0 714.8 68.0 L704.2 68.0 Q703 68.0 703 66.8 Z" fill="#f7a234"/>

<path d="M705.5 63 L707 64.5 L708.5 63 L710 64.5 L711.5 63 L713 64.5 M705.5 64.8 L707 66.3 L708.5 64.8 L710 66.3 L711.5 64.8 L713 66.3" stroke="#fff" stroke-width="0.6" fill="none"/>
<path d="M703 85.2 Q703 84.0 704.2 84.0 L712.3 84.0 L716 87.7 L716 97.1 Q716 98.3 714.8 98.3 L704.2 98.3 Q703 98.3 703 97.1 Z" fill="#9b6cf3"/>
<path d="M705.5 95.5 L708.8 91.2 L711 93.6 L712.2 92.6 L714 95.5 Z" fill="#fff"/><circle cx="709.5" cy="88.6" r="1.3" fill="#fff"/>
<path d="M703 114.0 Q703 112.8 704.2 112.8 L712.3 112.8 L716 116.5 L716 125.9 Q716 127.1 714.8 127.1 L704.2 127.1 Q703 127.1 703 125.9 Z" fill="#2fc48a"/>
<text x="709.5" y="123.6" text-anchor="middle" font-family="Liberation Sans" font-size="5" font-weight="bold" fill="#fff">SVG</text>
<path d="M703 151.2 Q703 150.0 704.2 150.0 L712.3 150.0 L716 153.7 L716 163.1 Q716 164.3 714.8 164.3 L704.2 164.3 Q703 164.3 703 163.1 Z" fill="#e8262b"/>
<path d="M705.6 161.6 C706.8 160.2 708.2 157.6 709.2 154.8 C709.6 153.6 709.6 152.3 709 152.3 C708.3 152.3 708.3 153.8 708.8 155 C709.8 157.4 711.6 158.9 714 159.3 C714.8 159.4 714.9 158.7 714.2 158.5 C711.5 157.8 708.3 158.6 705.9 161" stroke="#fff" stroke-width="1" fill="none"/>
</svg>
<div class="a" style="left:34.3px;top:13.5px;font-size:8.5px;color:#333;line-height:10px;white-space:nowrap">PNG image</div>
<div class="a" style="left:34.3px;top:43.8px;font-size:8.5px;color:#333;line-height:10px;white-space:nowrap">JPEG image</div>
<div class="a" style="left:34.3px;top:73px;font-size:8.5px;color:#333;line-height:10px;white-space:nowrap">SVG file</div>
<div class="a" style="left:34.3px;top:110.6px;font-size:8.5px;color:#333;line-height:10px;white-space:nowrap">PDF file</div>
</div>
<div class="a" style="left:156px;top:419.4px;width:157.6px;height:28.7px;background:#fff;border-radius:3.5px;box-shadow:0 0 3px rgba(0,0,0,.06)"></div>
<div class="a" style="left:170.2px;top:429px;font-size:8.3px;color:#333;line-height:10px">175%</div>
<div class="a" style="left:487.5px;top:420.6px;width:91.3px;height:27.5px;background:#fff;border-radius:3.5px;box-shadow:0 0 3px rgba(0,0,0,.06)"></div>
<svg class="a" style="left:150px;top:415px" width="440" height="40" viewBox="150 415 440 40">
<path d="M193.8 432.7 L196.8 435.5 L199.8 432.7" fill="none" stroke="#444" stroke-width="0.8"/>
<g fill="none" stroke="#3b4249" stroke-width="1.3">
<path d="M214.3 432 V429.6 H216.8 M223.4 429.6 H225.9 V432 M225.9 436.2 V438.6 H223.4 M216.8 438.6 H214.3 V436.2"/>
<path d="M287.6 432.2 V429.6 H290.3 M296.6 429.6 H299.2 V432.2 M299.2 436 V438.6 H296.6 M290.3 438.6 H287.6 V436"/>
<rect x="264.4" y="429.6" width="9.4" height="9.4"/>
</g>
<rect x="216.8" y="431.3" width="6.6" height="5.6" fill="#3b4249"/>
<rect x="239.2" y="429.2" width="10.7" height="10" fill="#3b4249"/>
<path d="M241 434.2 L243 432.4 V433.6 H246.1 V432.4 L248.1 434.2 L246.1 436 V434.8 H243 V436 Z" fill="#fff"/>
<path d="M266.2 437.2 L271.6 431.8 M268.6 437.2 H266.2 V434.8 M269.2 431.8 H271.6 V434.2" fill="none" stroke="#3b4249" stroke-width="1"/>
<rect x="501" y="430" width="10.9" height="9.6" rx="0.6" fill="#3b4249"/>
<rect x="502.6" y="436.2" width="7.7" height="1.6" fill="#fff"/>
<rect x="502.4" y="430.9" width="1.9" height="4.4" fill="#fff"/>
<circle cx="532.9" cy="434.5" r="4.1" fill="#4a5157"/>
<g fill="#3b4249"><circle cx="532.9" cy="428.8" r="0.65"/><circle cx="537.1" cy="430.5" r="0.75"/><circle cx="538.8" cy="434.2" r="0.75"/><circle cx="538.3" cy="437.9" r="0.7"/><circle cx="528.7" cy="430.5" r="0.75"/><circle cx="527" cy="434.2" r="0.75"/><circle cx="527.5" cy="437.9" r="0.7"/><rect x="531.6" y="440.1" width="2.6" height="1"/></g>
<rect x="553" y="430" width="12.2" height="9.5" rx="0.6" fill="#3b4249"/>
<g fill="#fff"><rect x="554.6" y="432.2" width="1.5" height="1.4"/><rect x="557.4" y="432.2" width="1.5" height="1.4"/><rect x="560.2" y="432.2" width="1.5" height="1.4"/><rect x="563" y="432.2" width="1" height="1.4"/><rect x="554.6" y="434.6" width="1.5" height="1.4"/><rect x="563" y="434.6" width="1" height="1.4"/><rect x="557.2" y="434.8" width="4.8" height="1"/><rect x="554.6" y="437" width="9.4" height="1.1"/></g>
</svg>
</body></html>
